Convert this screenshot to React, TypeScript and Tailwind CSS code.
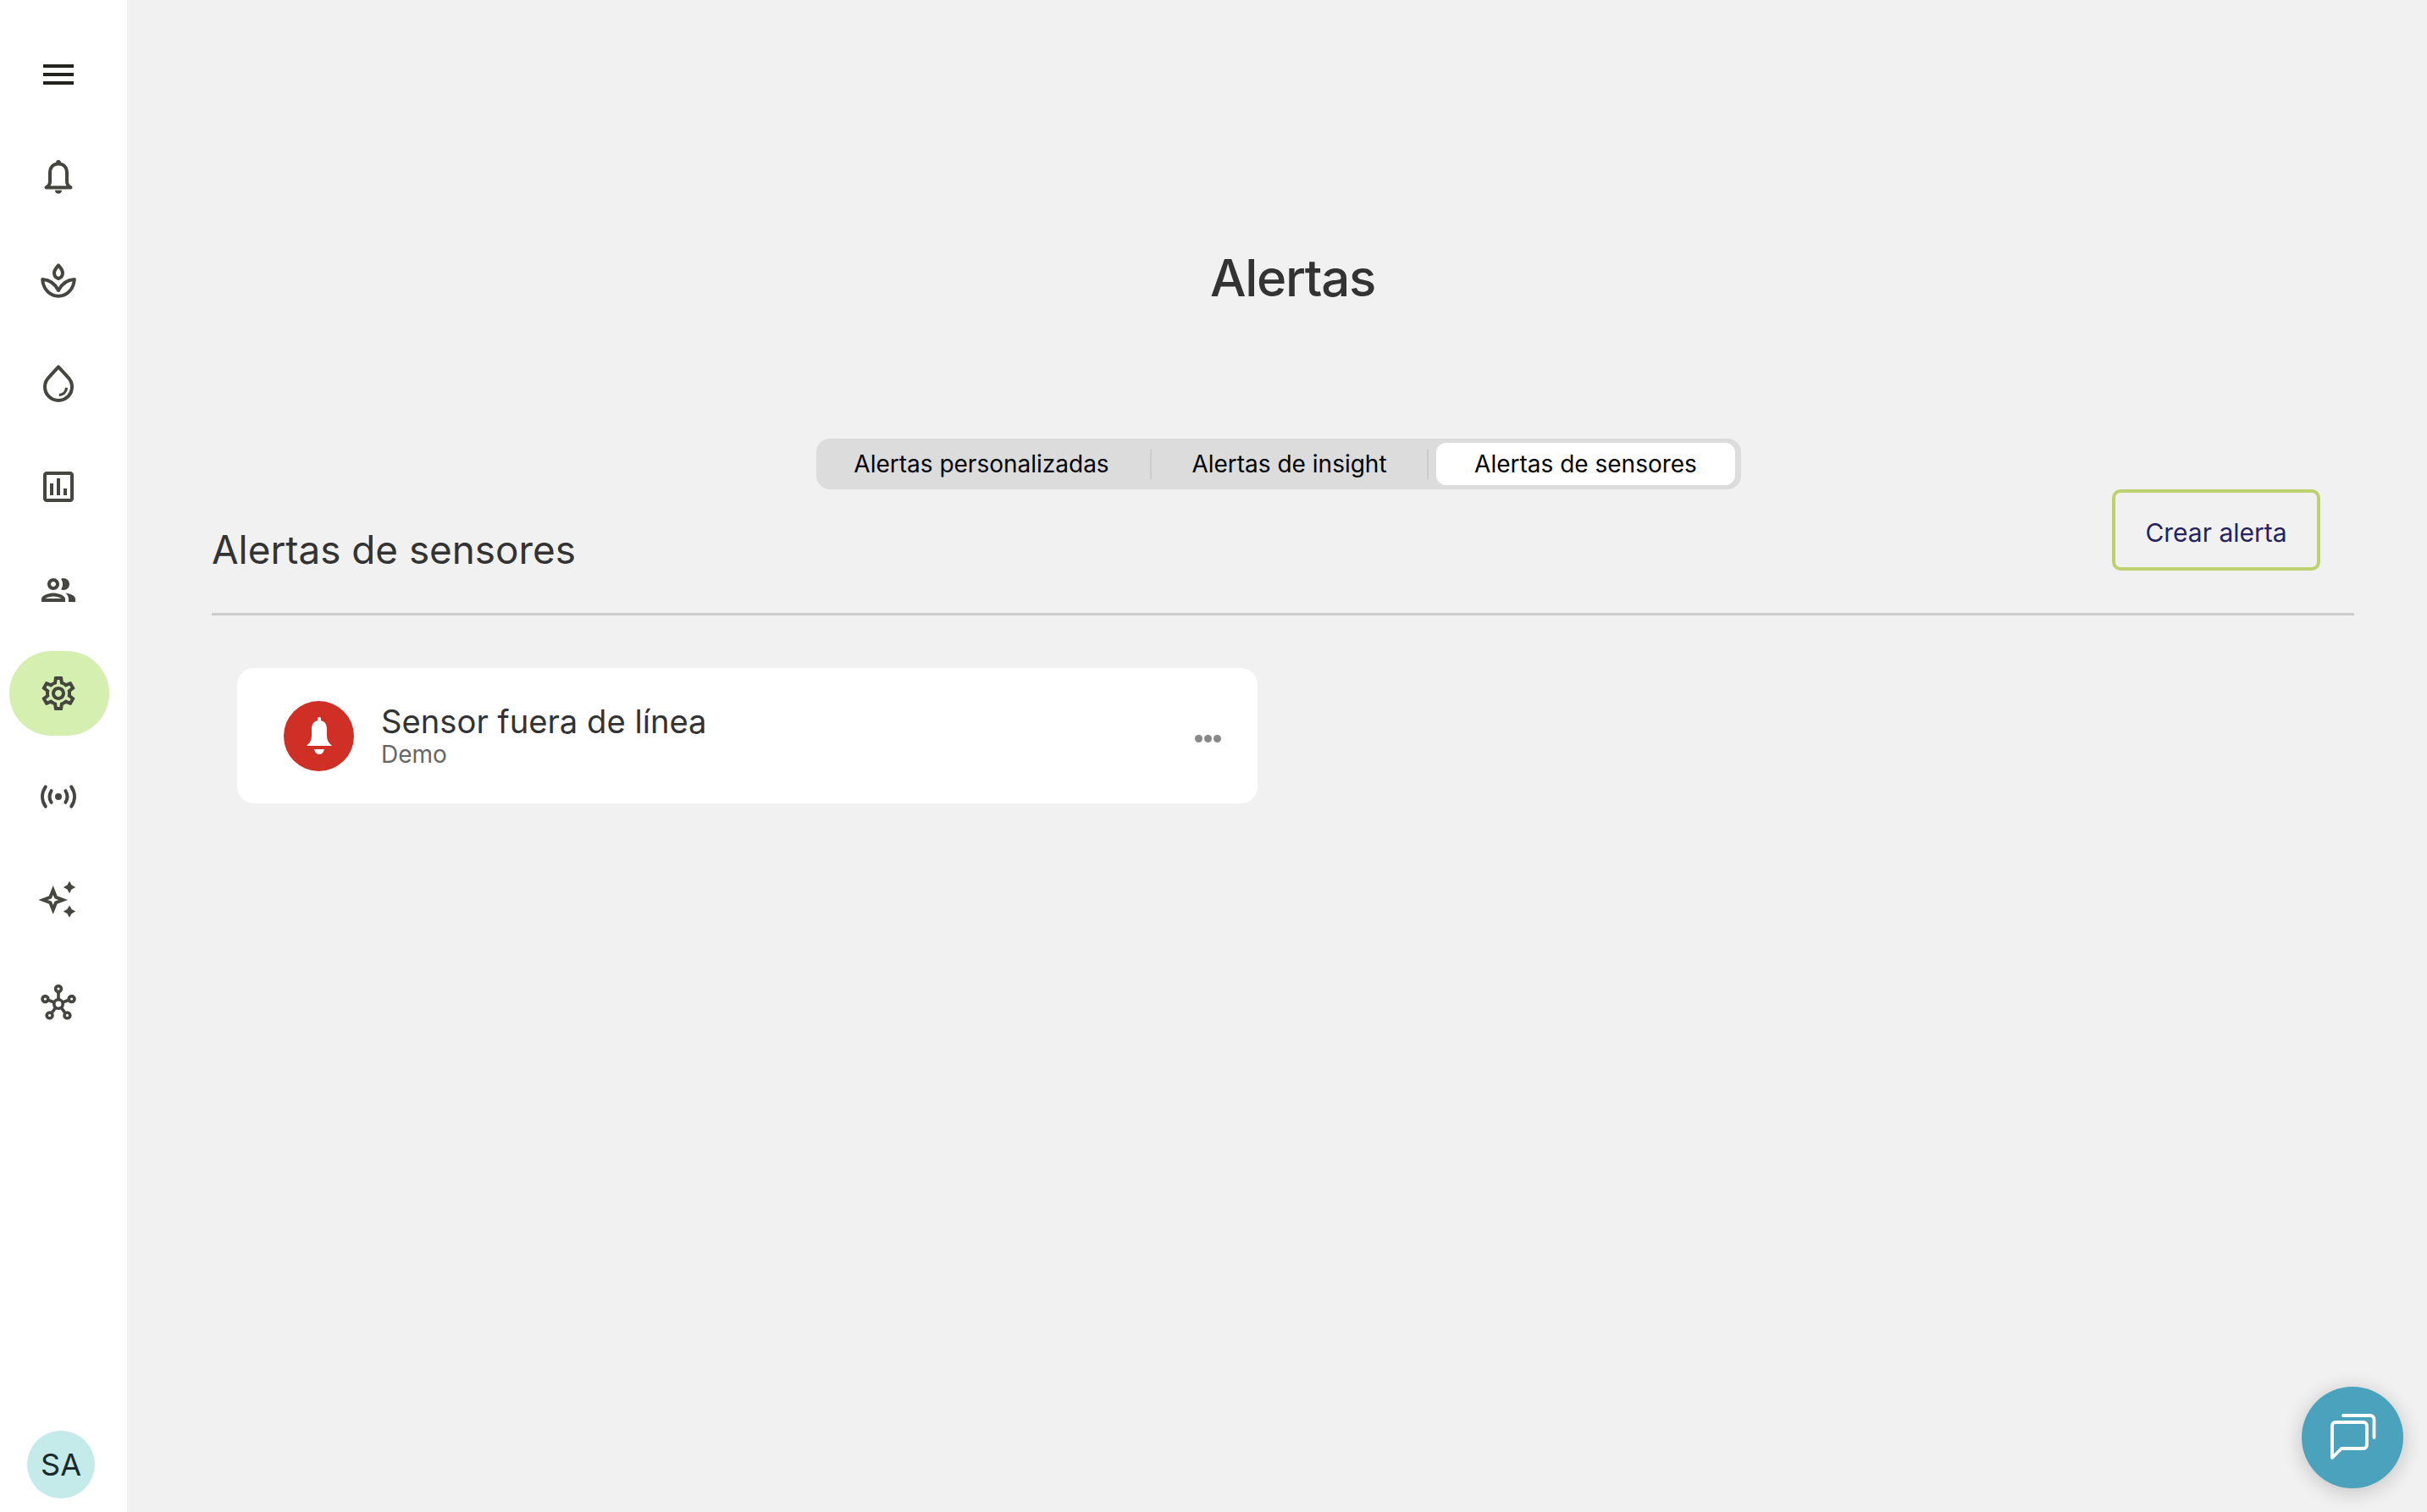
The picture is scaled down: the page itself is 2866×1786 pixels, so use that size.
const navIconClass = "w-12 h-12 text-[#44463f]";

function MenuIcon() {
  return (
    <svg viewBox="0 0 24 24" className="h-12 w-12 text-[#22231f]" fill="currentColor">
      <path d="M3 18h18v-2H3v2zm0-5h18v-2H3v2zm0-7v2h18V6H3z" />
    </svg>
  );
}

function BellIcon() {
  return (
    <svg viewBox="0 0 48 48" className={navIconClass} fill="none" stroke="currentColor" strokeWidth="4" strokeLinejoin="round">
      <circle cx="24" cy="7" r="2.900" fill="currentColor" stroke="none" />
      <path d="M24 8.500c-7 0-10 5-10 11v10c0 3-2 5.500-4.500 7h29c-2.500-1.500-4.500-4-4.500-7v-10c0-6-3-11-10-11z" />
      <path d="M20 39.700h8c0 2.400-1.800 4-4 4s-4-1.600-4-4z" fill="currentColor" stroke="none" />
    </svg>
  );
}

function PlantIcon() {
  return (
    <svg viewBox="0 0 24 24" className={navIconClass} fill="none" stroke="currentColor" strokeWidth="2" strokeLinejoin="round" strokeLinecap="round">
      <path d="M12 3.200c-1.700 1.900-2.500 3.200-2.500 4.500 0 1.500 1.100 2.800 2.500 3.300 1.400-.5 2.500-1.800 2.500-3.300 0-1.300-.8-2.600-2.500-4.500z" />
      <path d="M2.600 11.500c.3 5.700 4.400 9.900 9.400 9.900s9.100-4.200 9.400-9.900c-4 .3-7.500 2.700-9.400 6.500-1.900-3.800-5.400-6.200-9.400-6.500z" />
    </svg>
  );
}

function DropIcon() {
  return (
    <svg viewBox="0 0 24 24" className={navIconClass} fill="none" stroke="currentColor" strokeWidth="2" strokeLinecap="round" strokeLinejoin="round">
      <path d="M12 2.200 6.600 8.100A8 8 0 1 0 17.400 8.100z" />
      <path d="M12.400 18.800c2.400 0 4.100-1.800 4.400-4.300" strokeWidth="1.600" strokeLinecap="butt" />
    </svg>
  );
}

function ChartIcon() {
  return (
    <svg viewBox="0 0 24 24" className={navIconClass} fill="currentColor">
      <path d="M19 3H5c-1.100 0-2 .9-2 2v14c0 1.100.9 2 2 2h14c1.100 0 2-.9 2-2V5c0-1.100-.9-2-2-2zm0 16H5V5h14v14zM7 10h2v7H7zm4-3h2v10h-2zm4 6h2v4h-2z" />
    </svg>
  );
}

function PeopleIcon() {
  return (
    <svg viewBox="0 0 24 24" className={navIconClass} fill="currentColor">
      <path d="M9 12c1.930 0 3.500-1.570 3.500-3.500S10.930 5 9 5 5.500 6.570 5.500 8.500 7.070 12 9 12zm0-5c.83 0 1.500.67 1.500 1.500S9.830 10 9 10s-1.500-.67-1.500-1.500S8.170 7 9 7zm0 6.750c-2.340 0-7 1.170-7 3.500V19h14v-1.750c0-2.330-4.660-3.500-7-3.500zM4.340 17c.84-.58 2.870-1.250 4.660-1.250s3.820.67 4.660 1.250H4.340zm11.700-3.190c1.160.84 1.960 1.960 1.960 3.440V19h4v-1.750c0-2.020-3.500-3.170-5.960-3.440zM15 12c1.930 0 3.500-1.570 3.500-3.500S16.930 5 15 5c-.54 0-1.040.13-1.500.35.63.89 1 1.980 1 3.150s-.37 2.260-1 3.150c.46.220.96.350 1.500.350z" />
    </svg>
  );
}

function GearIcon() {
  return (
    <svg viewBox="0 0 24 24" className={navIconClass} fill="currentColor">
      <path d="M19.430 12.980c.04-.32.07-.64.07-.98s-.03-.66-.07-.98l2.110-1.650c.19-.15.24-.42.12-.64l-2-3.460c-.12-.22-.39-.3-.61-.22l-2.490 1c-.52-.4-1.080-.73-1.690-.98l-.38-2.650C14.460 2.180 14.250 2 14 2h-4c-.25 0-.46.18-.49.42l-.38 2.650c-.61.25-1.170.59-1.690.98l-2.490-1c-.23-.09-.49 0-.61.22l-2 3.460c-.13.22-.07.49.12.64l2.110 1.650c-.04.32-.07.65-.07.98s.03.66.07.98l-2.110 1.650c-.19.15-.24.42-.12.64l2 3.460c.12.22.39.3.61.22l2.490-1c.52.4 1.080.73 1.690.98l.38 2.650c.03.24.24.42.49.42h4c.25 0 .46-.18.49-.42l.38-2.650c.61-.25 1.170-.59 1.690-.98l2.490 1c.23.09.49 0 .61-.22l2-3.460c.12-.22.07-.49-.12-.64l-2.110-1.650zM17.450 11.270c.04.31.05.52.05.73 0 .21-.02.43-.05.73l-.14 1.130.89.7 1.080.84-.7 1.210-1.270-.51-1.040-.42-.9.68c-.43.32-.84.56-1.250.73l-1.060.43-.16 1.130-.2 1.350h-1.400l-.19-1.350-.16-1.130-1.060-.43c-.43-.18-.83-.41-1.230-.71l-.91-.7-1.060.43-1.270.51-.7-1.210 1.080-.84.89-.7-.14-1.130C6.520 12.430 6.500 12.200 6.500 12s.02-.43.05-.73l.14-1.130-.89-.7-1.080-.84.7-1.210 1.270.51 1.040.42.9-.68c.43-.32.84-.56 1.250-.73l1.060-.43.16-1.130.2-1.350h1.390l.19 1.350.16 1.130 1.060.43c.43.18.83.41 1.230.71l.91.7 1.060-.43 1.270-.51.7 1.210-1.070.85-.89.7.14 1.130zM12 8c-2.210 0-4 1.790-4 4s1.790 4 4 4 4-1.790 4-4-1.790-4-4-4zm0 6c-1.100 0-2-.9-2-2s.9-2 2-2 2 .9 2 2-.9 2-2 2z" />
    </svg>
  );
}

function SensorIcon() {
  return (
    <svg viewBox="0 0 24 24" className={navIconClass} fill="none" stroke="currentColor" strokeWidth="2" strokeLinecap="round">
      <circle cx="12" cy="12" r="2" fill="currentColor" stroke="none" />
      <path d="M7.800 8.600c-1.300 2.100-1.300 4.700 0 6.800" />
      <path d="M16.200 8.600c1.300 2.100 1.300 4.700 0 6.800" />
      <path d="M4.400 6.200c-2.500 3.600-2.500 8 0 11.600" />
      <path d="M19.600 6.200c2.500 3.600 2.500 8 0 11.600" />
    </svg>
  );
}

function SparkleIcon() {
  return (
    <svg viewBox="0 0 24 24" className={navIconClass}>
      <path d="M8.850 6.200l1.650 4.200 4.200 1.600-4.200 1.600-1.650 4.200-1.650-4.200L3 12l4.200-1.600z" fill="none" stroke="currentColor" strokeWidth="2" strokeMiterlimit="3" />
      <path d="M18.500 .9l1.300 2.300 2.300 1.300-2.300 1.300-1.300 2.300-1.300-2.300-2.300-1.300 2.300-1.300zM18.500 15.200l1.300 2.300 2.300 1.300-2.300 1.300-1.300 2.300-1.300-2.300-2.300-1.300 2.300-1.300z" fill="currentColor" />
    </svg>
  );
}

function HubIcon() {
  return (
    <svg viewBox="0 0 24 24" className={navIconClass} fill="none" stroke="currentColor" strokeWidth="1.800">
      <circle cx="12" cy="12.500" r="2.600" />
      <circle cx="12" cy="3.500" r="1.700" />
      <circle cx="4.200" cy="9.500" r="1.700" />
      <circle cx="19.800" cy="9.500" r="1.700" />
      <circle cx="6.800" cy="19.200" r="1.700" />
      <circle cx="17.200" cy="19.200" r="1.700" />
      <path d="M12 5.200v4.700M5.800 10.100l3.800 1.400M18.200 10.100l-3.800 1.400M7.900 17.900l2.500-3.300M16.100 17.900l-2.500-3.300" />
    </svg>
  );
}

const navItems = [
  { key: "bell", icon: <BellIcon /> },
  { key: "plant", icon: <PlantIcon /> },
  { key: "drop", icon: <DropIcon /> },
  { key: "chart", icon: <ChartIcon /> },
  { key: "people", icon: <PeopleIcon /> },
  { key: "gear", icon: <GearIcon />, active: true },
  { key: "sensor", icon: <SensorIcon /> },
  { key: "sparkle", icon: <SparkleIcon /> },
  { key: "hub", icon: <HubIcon /> },
];

export default function App() {
  return (
    <div className="flex h-screen overflow-hidden bg-[#f1f1f1] font-['Inter',sans-serif]">
      {/* Sidebar */}
      <aside className="flex w-[150px] shrink-0 flex-col items-center bg-white pt-[64px] pr-[10px] pb-4">
        <div className="-ml-[3px]">
          <MenuIcon />
        </div>
        <nav className="mt-[47px] flex flex-col items-center gap-[22px]">
          {navItems.map((item) => (
            <div
              key={item.key}
              className={`flex h-[100px] w-[118px] items-center justify-center rounded-[50px] ${item.active ? "bg-[#d5efb0]" : ""}`}
            >
              <div className="-ml-[2px]">{item.icon}</div>
            </div>
          ))}
        </nav>
        <div className="mt-auto ml-[4px] flex h-20 w-20 items-center justify-center rounded-full bg-[#c4eaea] text-[36px] text-[#1b2a2a]">
          SA
        </div>
      </aside>

      {/* Main */}
      <main className="flex min-w-0 flex-1 flex-col pt-[288px] pl-[100px] pr-[86px]">
        <h1 className="pl-[23px] text-center text-[60px] leading-[80px] font-medium tracking-[-1.3px] text-[#333333]">Alertas</h1>

        <div className="mt-[150px] mr-[10px] flex h-[60px] w-[1092px] items-center self-center rounded-[16px] bg-[#dcdcdc] p-[5px] text-[28px] text-black">
          <div className="mr-[9px] flex h-full w-[380px] items-center justify-center">Alertas personalizadas</div>
          <div className="h-[35px] w-[2px] bg-[#cccccc]" />
          <div className="flex h-full w-[325px] items-center justify-center">Alertas de insight</div>
          <div className="h-[35px] w-[2px] bg-[#cccccc]" />
          <div className="ml-[9px] flex h-full w-[353px] items-center justify-center rounded-[12px] bg-white">Alertas de sensores</div>
        </div>

        <div className="flex h-[149px] items-start justify-between border-b-[3px] border-[#cccccc]">
          <h2 className="mt-[40px] text-[45.800px] leading-[64px] font-normal text-[#333333]">Alertas de sensores</h2>
          <button className="mr-[40px] h-[96px] w-[246px] rounded-[10px] border-4 border-[#bdd26e] pt-[7px] text-[30px] text-[#25225e]">
            Crear alerta
          </button>
        </div>

        {/* Alert card */}
        <div className="mt-[62px] ml-[30px] flex h-[160px] w-[1205px] items-center rounded-[20px] bg-white pl-[55px] pr-[43px]">
          <div className="flex h-[83px] w-[83px] items-center justify-center rounded-full bg-[#d02f25]">
            <svg viewBox="0 0 30 44" className="h-[44px] w-[30px] text-white" fill="currentColor">
              <rect x="13" y="0" width="4" height="8" rx="2" />
              <path d="M15 4C8 4 6 9 6 15v7c0 6-3 9-6 12h30c-3-3-6-6-6-12v-7c0-6-2-11-9-11z" />
              <path d="M9 38h12c-1 4-3 6-6 6s-5-2-6-6z" />
            </svg>
          </div>
          <div className="ml-[32px] flex flex-1 flex-col">
            <span className="-mt-[2px] text-[38.200px] leading-[46px] text-[#333333]">Sensor fuera de línea</span>
            <span className="text-[28px] leading-[32px] text-[#666666]">Demo</span>
          </div>
          <div className="mt-[6px] flex gap-[2px]">
            <span className="h-[9px] w-[9px] rounded-full bg-[#888888]" />
            <span className="h-[9px] w-[9px] rounded-full bg-[#888888]" />
            <span className="h-[9px] w-[9px] rounded-full bg-[#888888]" />
          </div>
        </div>
      </main>

      {/* Chat button */}
      <button className="fixed right-[28px] bottom-[28px] flex h-[120px] w-[120px] items-center justify-center rounded-full bg-[#4aa2bc] shadow-[0_4px_24px_rgba(0,0,0,0.2)]">
        <svg viewBox="0 0 56 56" className="h-[56px] w-[56px]" fill="none" stroke="white" strokeWidth="3.800" strokeLinecap="round" strokeLinejoin="round">
          <path d="M4 14a4 4 0 0 1 4-4h33a4 4 0 0 1 4 4v23a4 4 0 0 1-4 4H15L4 52z" />
          <path d="M17 2h32a4.500 4.500 0 0 1 4.500 4.500V28" />
        </svg>
      </button>
    </div>
  );
}
